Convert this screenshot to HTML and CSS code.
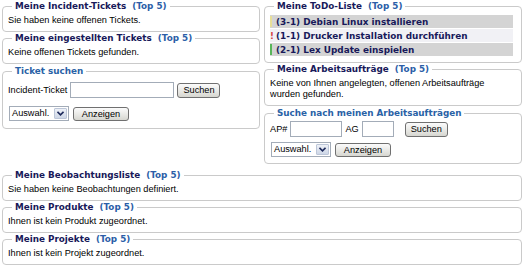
FILE: index.html
```html
<!DOCTYPE html>
<html lang="de">
<head>
    <meta charset="UTF-8">
    <title>Startseite</title>
    <link rel="stylesheet" href="styles.css">
</head>
<body>
    <div class="page">
        <div class="columns">
            <div class="col">
                <fieldset class="box">
                    <legend>Meine Incident-Tickets <span class="top">(Top 5)</span></legend>
                    <p>Sie haben keine offenen Tickets.</p>
                </fieldset>
                <fieldset class="box">
                    <legend>Meine eingestellten Tickets <span class="top">(Top 5)</span></legend>
                    <p>Keine offenen Tickets gefunden.</p>
                </fieldset>
                <fieldset class="box search ticket-search">
                    <legend class="blue">Ticket suchen</legend>
                    <div class="row">
                        <label>Incident-Ticket</label>
                        <input type="text" class="field ticket-field">
                        <button class="btn search-btn">Suchen</button>
                    </div>
                    <div class="row">
                        <div class="select">
                            <span class="select-text">Auswahl.</span>
                            <span class="select-arrow">
                                <svg width="7" height="5" viewBox="0 0 7 5"><path d="M0.5 0.8 L3.5 3.8 L6.5 0.8" fill="none" stroke="#1d2a5c" stroke-width="1.6"/></svg>
                            </span>
                        </div>
                        <button class="btn show-btn">Anzeigen</button>
                    </div>
                </fieldset>
            </div>

            <div class="col">
                <fieldset class="box todo">
                    <legend>Meine ToDo-Liste <span class="top">(Top 5)</span></legend>
                    <div class="todo-row dark"><span class="mark bar yellow"></span>(3-1) Debian Linux installieren</div>
                    <div class="todo-row light"><span class="mark bang">!</span>(1-1) Drucker Installation durchführen</div>
                    <div class="todo-row dark"><span class="mark bar green"></span>(2-1) Lex Update einspielen</div>
                </fieldset>
                <fieldset class="box">
                    <legend>Meine Arbeitsaufträge <span class="top">(Top 5)</span></legend>
                    <p>Keine von Ihnen angelegten, offenen Arbeitsaufträge<br>wurden gefunden.</p>
                </fieldset>
                <fieldset class="box search order-search">
                    <legend class="blue">Suche nach meinen Arbeitsaufträgen</legend>
                    <div class="row">
                        <label>AP#</label>
                        <input type="text" class="field ap-field">
                        <label class="ag-label">AG</label>
                        <input type="text" class="field ag-field">
                        <button class="btn search-btn wide-gap">Suchen</button>
                    </div>
                    <div class="row">
                        <div class="select">
                            <span class="select-text">Auswahl.</span>
                            <span class="select-arrow">
                                <svg width="7" height="5" viewBox="0 0 7 5"><path d="M0.5 0.8 L3.5 3.8 L6.5 0.8" fill="none" stroke="#1d2a5c" stroke-width="1.6"/></svg>
                            </span>
                        </div>
                        <button class="btn show-btn">Anzeigen</button>
                    </div>
                </fieldset>
            </div>
        </div>

        <div class="bottom">
            <fieldset class="box">
                <legend>Meine Beobachtungsliste <span class="top">(Top 5)</span></legend>
                <p>Sie haben keine Beobachtungen definiert.</p>
            </fieldset>
            <fieldset class="box">
                <legend>Meine Produkte <span class="top">(Top 5)</span></legend>
                <p>Ihnen ist kein Produkt zugeordnet.</p>
            </fieldset>
            <fieldset class="box">
                <legend>Meine Projekte <span class="top">(Top 5)</span></legend>
                <p>Ihnen ist kein Projekt zugeordnet.</p>
            </fieldset>
        </div>
    </div>
</body>
</html>
```

FILE: styles.css
```css
body {
    margin: 0;
    background: #fff;
    font-family: "Liberation Sans", Arial, sans-serif;
    font-size: 9.2px;
    color: #000;
}
.page {
    padding: 1px 6px 0 2px;
}
.columns {
    display: grid;
    grid-template-columns: 258px 258px;
    column-gap: 4px;
    align-items: start;
}
.box {
    margin: 0 0 1px;
    min-width: 0;
    padding: 3px 5px 5px;
    border: 1px solid #cacaca;
    border-radius: 4px;
}
.box legend {
    margin-left: 4px;
    padding: 0 3px;
    font-family: "DejaVu Sans", sans-serif;
    font-weight: bold;
    font-size: 8.8px;
    line-height: 11px;
    color: #18195a;
}
.box legend .top {
    margin-left: 3px;
    color: #2b5ea8;
}
.box legend.blue {
    color: #2a62a6;
}
.box p {
    margin: 0;
    line-height: 11px;
}

/* search forms */
.row {
    display: flex;
    align-items: center;
}
.ticket-search {
    margin-top: 2px;
    padding-top: 5px;
    padding-bottom: 7px;
}
.ticket-search .row + .row {
    margin-top: 8px;
}
.order-search {
    margin-top: 2px;
    padding-top: 2px;
    padding-bottom: 6px;
}
.order-search .row + .row {
    margin-top: 5px;
}
.field {
    box-sizing: border-box;
    height: 16px;
    margin: 0 0 0 3px;
    padding: 0 2px;
    border: 1px solid #a3acb8;
    background: #fff;
}
.ticket-field {
    width: 104px;
}
.ap-field {
    width: 52px;
}
.ag-field {
    width: 32px;
}
.ag-label {
    margin-left: 3px;
}
.btn {
    box-sizing: border-box;
    height: 15px;
    margin-left: 3px;
    padding: 0 5px;
    border: 1px solid #707070;
    border-radius: 3px;
    background: linear-gradient(#fbfbfb, #e6e6e2 60%, #d6d6d0);
    font-family: "Liberation Sans", Arial, sans-serif;
    font-size: 9.2px;
    line-height: 12px;
    color: #000;
}
.search-btn {
    width: 43px;
}
.wide-gap {
    margin-left: 11px;
}
.show-btn {
    width: 56px;
    height: 14px;
    margin-left: 4px;
}
.select {
    box-sizing: border-box;
    display: flex;
    align-items: stretch;
    width: 60px;
    height: 15px;
    margin-left: 1px;
    border: 1px solid #a3acb8;
    background: #fff;
}
.select-text {
    flex: 1;
    padding-left: 2px;
    line-height: 13px;
}
.select-arrow {
    display: flex;
    align-items: center;
    justify-content: center;
    width: 11px;
    margin: 1px;
    border: 1px solid #bcc6d8;
    border-radius: 1px;
    background: linear-gradient(#eef1f7, #cdd6e6);
}

/* todo list */
.todo-row {
    display: flex;
    align-items: center;
    height: 13px;
    margin: 0 3px 1px 0;
    font-family: "DejaVu Sans", sans-serif;
    font-weight: bold;
    font-size: 8.9px;
    color: #18195a;
}
.todo-row.dark {
    background: #d4d4d4;
}
.todo-row.light {
    background: #f1f1f5;
}
.mark {
    width: 6px;
    flex: none;
}
.mark.bar {
    width: 2px;
    height: 11px;
    margin: 0 4px 0 0;
}
.mark.yellow {
    background: #e8df98;
}
.mark.green {
    background: #58b65a;
}
.mark.bang {
    color: #d43c3c;
    font-size: 8.5px;
}

.bottom {
    margin-top: 5px;
}
```
